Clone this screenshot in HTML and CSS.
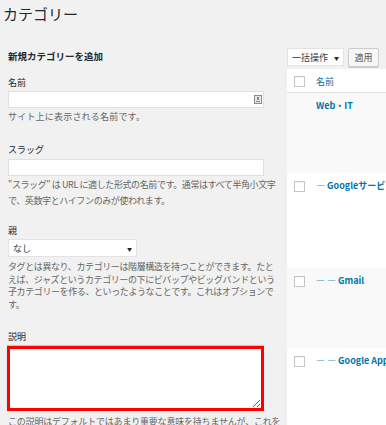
FILE: index.html
```html
<!DOCTYPE html>
<html lang="ja">
<head>
  <meta charset="UTF-8" />
  <title>カテゴリー</title>
  <link rel="stylesheet" href="styles.css">
</head>
<body>
  <h1 class="page-title">カテゴリー</h1>

  <div class="columns">
    <div class="col-left">
      <h2>新規カテゴリーを追加</h2>

      <div class="field field-name">
        <label>名前</label>
        <div class="input-wrap">
          <input type="text" class="text-input" />
          <svg class="ime-icon" width="8" height="9" viewBox="0 0 8 9">
            <rect x="0.5" y="0.5" width="7" height="8" fill="#e6e6e6" stroke="#8c8c8c" />
            <rect x="3" y="2" width="2" height="3" fill="#8c8c8c" />
            <rect x="2" y="6" width="4" height="1" fill="#8c8c8c" />
          </svg>
        </div>
        <p class="desc">サイト上に表示される名前です。</p>
      </div>

      <div class="field field-slug">
        <label>スラッグ</label>
        <input type="text" class="text-input" />
        <p class="desc">"スラッグ" は URL に適した形式の名前です。通常はすべて半角小文字で、英数字とハイフンのみが使われます。</p>
      </div>

      <div class="field field-parent">
        <label>親</label>
        <div class="select parent-select">
          <span>なし</span>
          <span class="arrow">▼</span>
        </div>
        <p class="desc">タグとは異なり、カテゴリーは階層構造を持つことができます。たとえば、ジャズというカテゴリーの下にビバップやビッグバンドという子カテゴリーを作る、といったようなことです。これはオプションで<br>す。</p>
      </div>

      <div class="field field-desc">
        <label>説明</label>
        <textarea class="desc-area"></textarea>
        <p class="desc">この説明はデフォルトではあまり重要な意味を持ちませんが、これを</p>
      </div>
    </div>

    <div class="col-right">
      <div class="tablenav">
        <div class="select bulk-select">
          <span>一括操作</span>
          <span class="arrow">▼</span>
        </div>
        <button class="button">適用</button>
      </div>

      <div class="term-table">
        <div class="row head">
          <span class="check"></span>
          <span class="name">名前</span>
        </div>
        <div class="row odd row-1">
          <span class="check-space"></span>
          <a class="name">Web・IT</a>
        </div>
        <div class="row row-2">
          <span class="check"></span>
          <a class="name">— Googleサービス</a>
        </div>
        <div class="row odd row-3">
          <span class="check"></span>
          <a class="name">— — Gmail</a>
        </div>
        <div class="row row-4">
          <span class="check"></span>
          <a class="name">— — Google Apps</a>
        </div>
      </div>
    </div>
  </div>
</body>
</html>
```

FILE: styles.css
```css
body {
  margin: 0;
  background: #f1f1f1;
  font-family: "Noto Sans CJK JP", "Noto Sans", sans-serif;
  font-size: 8.5px;
  color: #23282d;
  overflow: hidden;
}
.page-title {
  margin: 0;
  padding: 4px 0 0 3px;
  font-size: 15px;
  line-height: 20px;
  font-weight: 400;
  color: #23282d;
}
.columns {
  display: flex;
}
.col-left {
  width: 270px;
  padding-left: 8px;
  margin-right: 9px;
  flex-shrink: 0;
}
.col-right {
  flex: 1;
  min-width: 0;
}
h2 {
  margin: 25px 0 0;
  font-size: 9.5px;
  line-height: 14px;
  font-weight: 700;
}
label {
  display: block;
  font-size: 9px;
  line-height: 12px;
  color: #23282d;
}
.field {
  margin-top: 20px;
}
.field-name {
  margin-top: 14px;
}
.field-name label {
  margin-bottom: 2px;
}
.field-slug {
  margin-top: 21px;
}
.field-slug label {
  margin-bottom: 3px;
}
.field-parent {
  margin-top: 16px;
}
.field-parent label {
  margin-bottom: 2px;
}
.field-desc label {
  margin-bottom: 3px;
}
.input-wrap {
  position: relative;
  width: 256px;
}
.text-input {
  display: block;
  box-sizing: border-box;
  width: 256px;
  height: 17px;
  margin: 0;
  border: 1px solid #e0e0e0;
  background: #fff;
  padding: 0 4px;
}
.ime-icon {
  position: absolute;
  right: 2px;
  top: 4px;
}
.desc {
  margin: 3px 0 0;
  font-size: 9px;
  letter-spacing: -0.4px;
  line-height: 12px;
  color: #666;
}
.field-name .desc {
  letter-spacing: 0.2px;
}
.field-slug .desc {
  margin-top: 1px;
  line-height: 16px;
}
.field-parent .desc {
  width: 270px;
  margin-top: 4px;
  line-height: 12.5px;
}
.field-desc .desc {
  margin-top: 5px;
  letter-spacing: -0.2px;
  white-space: nowrap;
}
.select {
  display: flex;
  justify-content: space-between;
  align-items: center;
  box-sizing: border-box;
  background: #fff;
  border: 1px solid #e3e3e3;
  color: #32373c;
}
.select .arrow {
  font-size: 5px;
  color: #222;
}
.parent-select {
  width: 129px;
  height: 18px;
  padding: 0 4px 0 4px;
  font-size: 9px;
}
.desc-area {
  display: block;
  box-sizing: border-box;
  width: 257px;
  height: 65px;
  margin: 0 0 0 -1px;
  border: 3px solid #ff0000;
  background: #fff;
  box-shadow: 0 -1px 1px #a9d1e6;
}
.tablenav {
  display: flex;
  gap: 4px;
  margin-top: 24px;
  height: 21px;
}
.bulk-select {
  width: 57px;
  height: 18px;
  padding: 0 4px;
  font-size: 9px;
}
.button {
  box-sizing: border-box;
  width: 31px;
  height: 19px;
  padding: 0;
  border: 1px solid #cccccc;
  border-radius: 2px;
  background: #f7f7f7;
  box-shadow: 0 1px 0 #cccccc;
  font-family: inherit;
  font-size: 9px;
  color: #555;
}
.term-table {
  background: #fff;
}
.row {
  display: flex;
  align-items: flex-start;
  box-sizing: border-box;
  padding: 7px 0 0 7px;
}
.row.odd {
  background: #f9f9f9;
}
.head {
  height: 24px;
  border-bottom: 1px solid #e1e1e1;
}
.row-1 { height: 80px; }
.row-2 { height: 95px; }
.row-3 { height: 80px; }
.row-4 { height: 80px; }
.check,
.check-space {
  flex-shrink: 0;
  box-sizing: border-box;
  width: 11px;
  height: 11px;
}
.check {
  border: 1px solid #c3c6c9;
  background: #fff;
  box-shadow: inset 0 1px 1px rgba(0,0,0,0.05);
}
.row .check {
  margin-top: 1px;
}
.head .check {
  margin-top: 0;
}
.name {
  margin-left: 11px;
  line-height: 12px;
  color: #0073aa;
  white-space: nowrap;
  font-size: 9px;
}
a.name {
  font-weight: 700;
}
.head .name {
  font-weight: 400;
}
```
